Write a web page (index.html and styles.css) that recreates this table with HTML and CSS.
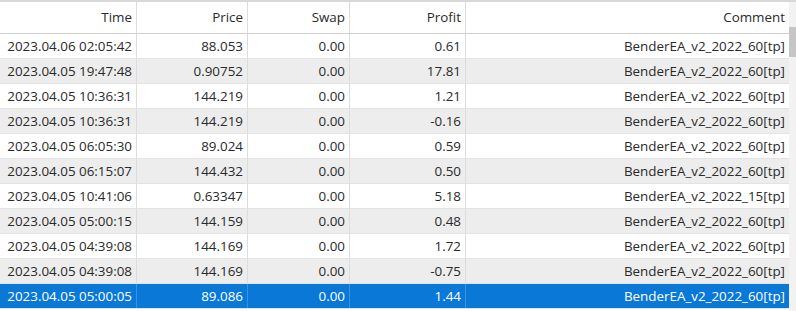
FILE: index.html
```html
<!DOCTYPE html>
<html>
<head>
<meta charset="utf-8">
<link rel="stylesheet" href="styles.css">
</head>
<body>
<div class="wrap">
  <div class="grid">
    <div class="row head"><div>Time</div><div>Price</div><div>Swap</div><div>Profit</div><div>Comment</div></div>
    <div class="row"><div>2023.04.06 02:05:42</div><div>88.053</div><div>0.00</div><div>0.61</div><div>BenderEA_v2_2022_60[tp]</div></div>
    <div class="row alt"><div>2023.04.05 19:47:48</div><div>0.90752</div><div>0.00</div><div>17.81</div><div>BenderEA_v2_2022_60[tp]</div></div>
    <div class="row"><div>2023.04.05 10:36:31</div><div>144.219</div><div>0.00</div><div>1.21</div><div>BenderEA_v2_2022_60[tp]</div></div>
    <div class="row alt"><div>2023.04.05 10:36:31</div><div>144.219</div><div>0.00</div><div>-0.16</div><div>BenderEA_v2_2022_60[tp]</div></div>
    <div class="row"><div>2023.04.05 06:05:30</div><div>89.024</div><div>0.00</div><div>0.59</div><div>BenderEA_v2_2022_60[tp]</div></div>
    <div class="row alt"><div>2023.04.05 06:15:07</div><div>144.432</div><div>0.00</div><div>0.50</div><div>BenderEA_v2_2022_60[tp]</div></div>
    <div class="row"><div>2023.04.05 10:41:06</div><div>0.63347</div><div>0.00</div><div>5.18</div><div>BenderEA_v2_2022_15[tp]</div></div>
    <div class="row alt"><div>2023.04.05 05:00:15</div><div>144.159</div><div>0.00</div><div>0.48</div><div>BenderEA_v2_2022_60[tp]</div></div>
    <div class="row"><div>2023.04.05 04:39:08</div><div>144.169</div><div>0.00</div><div>1.72</div><div>BenderEA_v2_2022_60[tp]</div></div>
    <div class="row alt"><div>2023.04.05 04:39:08</div><div>144.169</div><div>0.00</div><div>-0.75</div><div>BenderEA_v2_2022_60[tp]</div></div>
    <div class="row sel"><div>2023.04.05 05:00:05</div><div>89.086</div><div>0.00</div><div>1.44</div><div>BenderEA_v2_2022_60[tp]</div></div>
  </div>
  <div class="scroll"><div class="thumb"></div></div>
</div>
</body>
</html>
```
FILE: styles.css
```css
html, body { margin: 0; padding: 0; background: #fff; }
body { width: 796px; height: 311px; overflow: hidden; font-family: "Open Sans", "Noto Sans", sans-serif; font-size: 13.4px; color: #2a2a2a; }
.wrap { display: flex; height: 311px; border-top: 2px solid #d8d8d8; box-sizing: border-box; }
.grid { width: 789px; }
.row { display: grid; grid-template-columns: 137px 111px 102px 116px 323px; height: 25px; border-bottom: 1px solid #e3e3e3; box-sizing: border-box; }
.row > div { text-align: right; padding-right: 4px; line-height: 24px; border-right: 1px solid #dcdcdc; white-space: nowrap; overflow: hidden; }
.row > div:last-child { border-right: none; }
.head { height: 32px; border-bottom: 1px solid #d0d0d0; }
.head > div { line-height: 31px; }
.alt { background: #ededed; }
.sel { background: #0a78d7; color: #fff; }
.sel > div { border-right-color: #3b93e0; }
.scroll { width: 7px; background: #f2f2f2; }
.thumb { margin-top: 25px; height: 30px; background: #c6c6c6; }
```
